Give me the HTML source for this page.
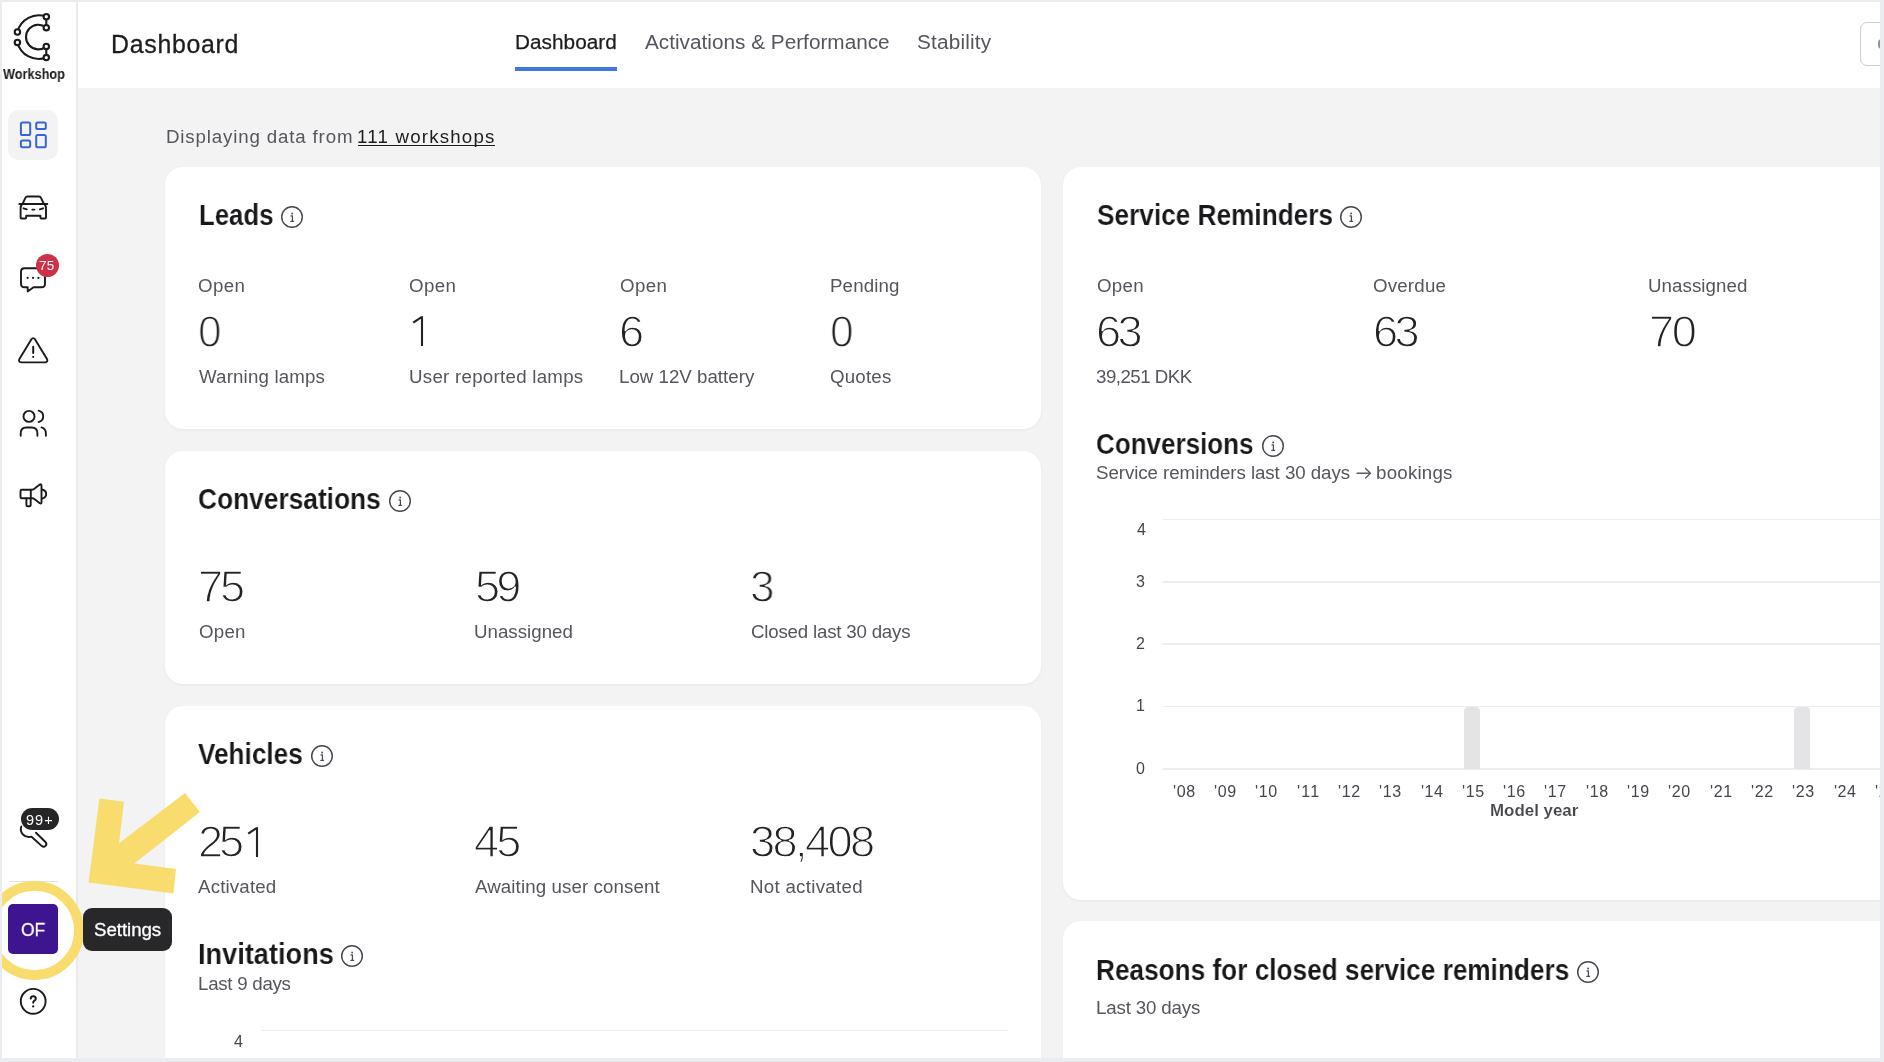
<!DOCTYPE html>
<html lang="en">
<head>
<meta charset="utf-8">
<title>Dashboard</title>
<style>
*{box-sizing:border-box;margin:0;padding:0}
html,body{width:1884px;height:1062px;overflow:hidden;background:#f3f3f3;font-family:"Liberation Sans",sans-serif;}
#root{position:absolute;left:0;top:0;width:1884px;height:1062px;overflow:hidden;background:#f3f3f3}
.a{position:absolute}
.t{position:absolute;white-space:nowrap;line-height:1;transform-origin:0 50%;will-change:transform;}
.card{position:absolute;background:#fff;border-radius:18px;box-shadow:0 1px 3px rgba(0,0,0,.05);}
.num{-webkit-text-stroke:1.35px #fff;}
.sb{-webkit-text-stroke:0.12px #fff;}
.gl{position:absolute;height:2px;background:#ededef}
#sidebar{left:2px;top:2px;width:76px;height:1056px;background:#fff;border-right:2px solid #eaeaed}
#header{left:78px;top:2px;width:1802px;height:86px;background:#fff}
.fr{position:absolute;background:#ebecf0;z-index:50}
</style>
</head>
<body>
<div id="root">
<div class="a" id="header"></div>
<div class="a" id="sidebar"></div>
<div class="card" style="left:165px;top:166.6px;width:876.3px;height:262px"></div>
<div class="card" style="left:165px;top:450.6px;width:876.3px;height:233px"></div>
<div class="card" style="left:165px;top:705.8px;width:876.3px;height:400px"></div>
<div class="card" style="left:1063px;top:166.6px;width:900px;height:733px"></div>
<div class="card" style="left:1063px;top:920.8px;width:900px;height:300px"></div>
<span class="t" style="left:110.66px;top:31.65px;font-size:24.9px;color:#1d1d20;letter-spacing:0.704px;-webkit-text-stroke:0.3px #1d1d20;">Dashboard</span>
<span class="t" style="left:515.10px;top:32.23px;font-size:20.75px;color:#1d1d20;letter-spacing:0.041px;-webkit-text-stroke:0.25px #1d1d20;">Dashboard</span>
<span class="t" style="left:645.46px;top:32.23px;font-size:20.75px;color:#55555e;letter-spacing:0.007px;">Activations &amp; Performance</span>
<span class="t" style="left:917.26px;top:32.23px;font-size:20.75px;color:#55555e;letter-spacing:0.178px;">Stability</span>
<div class="a" style="left:515px;top:67px;width:102px;height:4px;background:#4178dc"></div>
<div class="a" style="left:1860px;top:21.5px;width:40px;height:44px;border:1.5px solid #cdcdd2;border-radius:7px;background:#fff"></div>
<div class="a" style="left:1877.8px;top:39px;width:8px;height:9.5px;border-radius:5px;background:#909096"></div>
<span class="t" style="left:165.57px;top:127.75px;font-size:18.7px;color:#55555e;letter-spacing:0.848px;">Displaying data from</span>
<span class="t" style="left:357.18px;top:128.05px;font-size:18.7px;color:#1d1d20;letter-spacing:1.208px;">111 workshops</span>
<div class="a" style="left:357.5px;top:145px;width:137px;height:1.4px;background:#1d1d20"></div>
<span class="t sb" style="left:198.78px;top:200.50px;font-size:29px;color:#18181b;font-weight:700;transform:scaleX(0.8886);">Leads</span>
<svg class="a" style="left:279.70px;top:204.75px" width="24" height="24" viewBox="0 0 24 24"><circle cx="12" cy="12" r="10.3" fill="none" stroke="#484852" stroke-width="1.45"/><path d="M11 10.9h1.4v5.200M10.800 16.300h2.800" fill="none" stroke="#484852" stroke-width="1.200" stroke-linecap="round" stroke-linejoin="round"/><circle cx="12.1" cy="8.500" r="0.900" fill="#484852"/></svg>
<span class="t" style="left:198.11px;top:276.65px;font-size:18.7px;color:#55555e;letter-spacing:0.418px;">Open</span>
<span class="t" style="left:408.71px;top:276.65px;font-size:18.7px;color:#55555e;letter-spacing:0.418px;">Open</span>
<span class="t" style="left:619.71px;top:276.65px;font-size:18.7px;color:#55555e;letter-spacing:0.385px;">Open</span>
<span class="t" style="left:830.17px;top:276.65px;font-size:18.7px;color:#55555e;letter-spacing:0.152px;">Pending</span>
<span class="t num" style="left:198.45px;top:308.60px;font-size:45.2px;color:#232326;transform:scaleX(0.9349);">0</span>
<svg class="a" style="left:410.00px;top:313.90px" width="16" height="34" viewBox="-12 -32 16 34"><path d="M-1.05 -29.7H1.05V0H-1.05V-27.2L-8.1 -22.4L-9.4 -24.2Z" fill="#232326"/></svg>
<span class="t num" style="left:618.91px;top:308.60px;font-size:45.2px;color:#232326;transform:scaleX(0.9973);">6</span>
<span class="t num" style="left:830.44px;top:308.60px;font-size:45.2px;color:#232326;transform:scaleX(0.9395);">0</span>
<span class="t" style="left:198.92px;top:368.45px;font-size:18.7px;color:#55555e;letter-spacing:0.162px;">Warning lamps</span>
<span class="t" style="left:408.56px;top:368.45px;font-size:18.7px;color:#55555e;letter-spacing:0.273px;">User reported lamps</span>
<span class="t" style="left:619.47px;top:368.45px;font-size:18.7px;color:#55555e;letter-spacing:0.017px;">Low 12V battery</span>
<span class="t" style="left:830.31px;top:368.45px;font-size:18.7px;color:#55555e;letter-spacing:0.214px;">Quotes</span>
<span class="t sb" style="left:198.42px;top:484.70px;font-size:29px;color:#18181b;font-weight:700;transform:scaleX(0.9072);">Conversations</span>
<svg class="a" style="left:388.00px;top:488.90px" width="24" height="24" viewBox="0 0 24 24"><circle cx="12" cy="12" r="10.3" fill="none" stroke="#484852" stroke-width="1.45"/><path d="M11 10.9h1.4v5.200M10.800 16.300h2.800" fill="none" stroke="#484852" stroke-width="1.200" stroke-linecap="round" stroke-linejoin="round"/><circle cx="12.1" cy="8.500" r="0.900" fill="#484852"/></svg>
<span class="t num" style="left:197.68px;top:564.00px;font-size:45.2px;color:#232326;letter-spacing:-3.161px;">75</span>
<span class="t num" style="left:475.09px;top:564.00px;font-size:45.2px;color:#232326;letter-spacing:-3.926px;">59</span>
<span class="t num" style="left:750.21px;top:564.00px;font-size:45.2px;color:#232326;transform:scaleX(0.9799);">3</span>
<span class="t" style="left:198.61px;top:622.55px;font-size:18.7px;color:#55555e;letter-spacing:0.251px;">Open</span>
<span class="t" style="left:474.46px;top:622.55px;font-size:18.7px;color:#55555e;letter-spacing:0.021px;">Unassigned</span>
<span class="t" style="left:750.95px;top:622.55px;font-size:18.7px;color:#55555e;letter-spacing:-0.198px;">Closed last 30 days</span>
<span class="t sb" style="left:198.32px;top:740.10px;font-size:29px;color:#18181b;font-weight:700;transform:scaleX(0.9024);">Vehicles</span>
<svg class="a" style="left:309.60px;top:744.40px" width="24" height="24" viewBox="0 0 24 24"><circle cx="12" cy="12" r="10.3" fill="none" stroke="#484852" stroke-width="1.45"/><path d="M11 10.9h1.4v5.200M10.800 16.300h2.800" fill="none" stroke="#484852" stroke-width="1.200" stroke-linecap="round" stroke-linejoin="round"/><circle cx="12.1" cy="8.500" r="0.900" fill="#484852"/></svg>
<span class="t num" style="left:198.13px;top:818.90px;font-size:45.2px;color:#232326;letter-spacing:-4.205px;">25</span>
<svg class="a" style="left:245.40px;top:824.50px" width="16" height="34" viewBox="-12 -32 16 34"><path d="M-1.05 -29.7H1.05V0H-1.05V-27.2L-8.1 -22.4L-9.4 -24.2Z" fill="#232326"/></svg>
<span class="t num" style="left:473.86px;top:818.90px;font-size:45.2px;color:#232326;letter-spacing:-2.841px;">45</span>
<span class="t num" style="left:750.18px;top:818.90px;font-size:45.2px;color:#232326;letter-spacing:-2.593px;">38,408</span>
<span class="t" style="left:198.26px;top:878.35px;font-size:18.7px;color:#55555e;letter-spacing:0.165px;">Activated</span>
<span class="t" style="left:474.76px;top:878.35px;font-size:18.7px;color:#55555e;letter-spacing:0.113px;">Awaiting user consent</span>
<span class="t" style="left:750.37px;top:878.35px;font-size:18.7px;color:#55555e;letter-spacing:0.291px;">Not activated</span>
<span class="t sb" style="left:197.98px;top:939.90px;font-size:29px;color:#18181b;font-weight:700;transform:scaleX(0.9360);">Invitations</span>
<svg class="a" style="left:340.10px;top:943.80px" width="24" height="24" viewBox="0 0 24 24"><circle cx="12" cy="12" r="10.3" fill="none" stroke="#484852" stroke-width="1.45"/><path d="M11 10.9h1.4v5.200M10.800 16.300h2.800" fill="none" stroke="#484852" stroke-width="1.200" stroke-linecap="round" stroke-linejoin="round"/><circle cx="12.1" cy="8.500" r="0.900" fill="#484852"/></svg>
<span class="t" style="left:198.27px;top:974.65px;font-size:18.7px;color:#55555e;letter-spacing:-0.263px;">Last 9 days</span>
<div class="gl" style="left:261px;top:1029.5px;width:746.5px;height:1.2px"></div>
<span class="t" style="left:234.13px;top:1033.50px;font-size:16px;color:#45454c;">4</span>
<span class="t sb" style="left:1096.64px;top:200.50px;font-size:29px;color:#18181b;font-weight:700;transform:scaleX(0.9038);">Service Reminders</span>
<svg class="a" style="left:1338.90px;top:204.75px" width="24" height="24" viewBox="0 0 24 24"><circle cx="12" cy="12" r="10.3" fill="none" stroke="#484852" stroke-width="1.45"/><path d="M11 10.9h1.4v5.200M10.800 16.300h2.800" fill="none" stroke="#484852" stroke-width="1.200" stroke-linecap="round" stroke-linejoin="round"/><circle cx="12.1" cy="8.500" r="0.900" fill="#484852"/></svg>
<span class="t" style="left:1096.51px;top:276.65px;font-size:18.7px;color:#55555e;letter-spacing:0.318px;">Open</span>
<span class="t" style="left:1373.11px;top:276.65px;font-size:18.7px;color:#55555e;letter-spacing:0.199px;">Overdue</span>
<span class="t" style="left:1648.46px;top:276.65px;font-size:18.7px;color:#55555e;letter-spacing:0.076px;">Unassigned</span>
<span class="t num" style="left:1096.40px;top:308.60px;font-size:45.2px;color:#232326;letter-spacing:-3.595px;">63</span>
<span class="t num" style="left:1372.80px;top:308.60px;font-size:45.2px;color:#232326;letter-spacing:-3.695px;">63</span>
<span class="t num" style="left:1648.78px;top:308.60px;font-size:45.2px;color:#232326;letter-spacing:-2.393px;">70</span>
<span class="t" style="left:1096.49px;top:368.25px;font-size:18.7px;color:#55555e;letter-spacing:-0.513px;">39,251 DKK</span>
<span class="t sb" style="left:1096.33px;top:429.60px;font-size:29px;color:#18181b;font-weight:700;transform:scaleX(0.8968);">Conversions</span>
<svg class="a" style="left:1260.80px;top:433.60px" width="24" height="24" viewBox="0 0 24 24"><circle cx="12" cy="12" r="10.3" fill="none" stroke="#484852" stroke-width="1.45"/><path d="M11 10.9h1.4v5.200M10.800 16.300h2.800" fill="none" stroke="#484852" stroke-width="1.200" stroke-linecap="round" stroke-linejoin="round"/><circle cx="12.1" cy="8.500" r="0.900" fill="#484852"/></svg>
<span class="t" style="left:1096.45px;top:464.35px;font-size:18.7px;color:#55555e;letter-spacing:-0.050px;">Service reminders last 30 days</span>
<svg class="a" style="left:1355px;top:466px" width="18" height="14" viewBox="0 0 18 14"><path d="M2 7.2h13.400M10.600 2.400l4.900 4.800-4.900 4.800" fill="none" stroke="#5a5a63" stroke-width="1.350" stroke-linecap="round" stroke-linejoin="round"/></svg>
<span class="t" style="left:1376.19px;top:464.35px;font-size:18.7px;color:#55555e;letter-spacing:0.232px;">bookings</span>
<div class="gl" style="left:1163px;top:518.9px;width:760px;height:1.6px"></div>
<div class="gl" style="left:1163px;top:581.0px;width:760px;height:1.6px"></div>
<div class="gl" style="left:1163px;top:643.4px;width:760px;height:1.6px"></div>
<div class="gl" style="left:1163px;top:705.8px;width:760px;height:1.6px"></div>
<div class="gl" style="left:1163px;top:768.2px;width:760px;height:1.6px"></div>
<span class="t" style="left:1136.53px;top:522.30px;font-size:16px;color:#45454c;">4</span>
<span class="t" style="left:1136.29px;top:573.80px;font-size:16px;color:#45454c;">3</span>
<span class="t" style="left:1136.10px;top:635.80px;font-size:16px;color:#45454c;">2</span>
<span class="t" style="left:1136.28px;top:698.30px;font-size:16px;color:#45454c;">1</span>
<span class="t" style="left:1136.28px;top:760.80px;font-size:16px;color:#45454c;">0</span>
<div class="a" style="left:1463.5px;top:706.6px;width:16.5px;height:62.4px;background:#e4e4e6;border-radius:4px 4px 0 0"></div>
<div class="a" style="left:1793.5px;top:706.6px;width:16.5px;height:62.4px;background:#e4e4e6;border-radius:4px 4px 0 0"></div>
<span class="t" style="left:1172.79px;top:784.30px;font-size:16px;color:#45454c;letter-spacing:0.628px;">'08</span>
<span class="t" style="left:1214.09px;top:784.30px;font-size:16px;color:#45454c;letter-spacing:0.659px;">'09</span>
<span class="t" style="left:1255.39px;top:784.30px;font-size:16px;color:#45454c;letter-spacing:0.593px;">'10</span>
<span class="t" style="left:1296.69px;top:784.30px;font-size:16px;color:#45454c;letter-spacing:1.265px;">'11</span>
<span class="t" style="left:1337.99px;top:784.30px;font-size:16px;color:#45454c;letter-spacing:0.683px;">'12</span>
<span class="t" style="left:1379.29px;top:784.30px;font-size:16px;color:#45454c;letter-spacing:0.632px;">'13</span>
<span class="t" style="left:1420.59px;top:784.30px;font-size:16px;color:#45454c;letter-spacing:0.515px;">'14</span>
<span class="t" style="left:1461.89px;top:784.30px;font-size:16px;color:#45454c;letter-spacing:0.616px;">'15</span>
<span class="t" style="left:1503.19px;top:784.30px;font-size:16px;color:#45454c;letter-spacing:0.632px;">'16</span>
<span class="t" style="left:1544.49px;top:784.30px;font-size:16px;color:#45454c;letter-spacing:0.683px;">'17</span>
<span class="t" style="left:1585.79px;top:784.30px;font-size:16px;color:#45454c;letter-spacing:0.628px;">'18</span>
<span class="t" style="left:1627.09px;top:784.30px;font-size:16px;color:#45454c;letter-spacing:0.659px;">'19</span>
<span class="t" style="left:1668.39px;top:784.30px;font-size:16px;color:#45454c;letter-spacing:0.593px;">'20</span>
<span class="t" style="left:1709.69px;top:784.30px;font-size:16px;color:#45454c;letter-spacing:0.671px;">'21</span>
<span class="t" style="left:1750.99px;top:784.30px;font-size:16px;color:#45454c;letter-spacing:0.683px;">'22</span>
<span class="t" style="left:1792.29px;top:784.30px;font-size:16px;color:#45454c;letter-spacing:0.632px;">'23</span>
<span class="t" style="left:1833.59px;top:784.30px;font-size:16px;color:#45454c;letter-spacing:0.515px;">'24</span>
<span class="t" style="left:1874.89px;top:784.30px;font-size:16px;color:#45454c;letter-spacing:0.616px;">'25</span>
<span class="t sb" style="left:1490.07px;top:803.20px;font-size:16.6px;color:#46464c;font-weight:700;transform:scaleX(1.0192);">Model year</span>
<span class="t sb" style="left:1095.65px;top:955.90px;font-size:29px;color:#18181b;font-weight:700;transform:scaleX(0.9034);">Reasons for closed service reminders</span>
<svg class="a" style="left:1575.50px;top:960.00px" width="24" height="24" viewBox="0 0 24 24"><circle cx="12" cy="12" r="10.3" fill="none" stroke="#484852" stroke-width="1.45"/><path d="M11 10.9h1.4v5.200M10.800 16.300h2.800" fill="none" stroke="#484852" stroke-width="1.200" stroke-linecap="round" stroke-linejoin="round"/><circle cx="12.1" cy="8.500" r="0.900" fill="#484852"/></svg>
<span class="t" style="left:1095.87px;top:998.75px;font-size:18.7px;color:#55555e;letter-spacing:-0.157px;">Last 30 days</span>
<svg class="a" style="left:10px;top:8px" width="48" height="58" viewBox="10 8 48 58" fill="none" stroke="#1b1b1d" stroke-width="2.1" stroke-linecap="round">
<path d="M17.4 32A22 22 0 0 1 46.3 16.7"/>
<path d="M17.4 42.4A22 22 0 0 0 46.3 57.6"/>
<path d="M46.3 27.7A12.300 12.300 0 1 0 46.300 46.400"/>
<path d="M46.3 19.600v5.200M46.300 49v5.400"/>
<circle cx="46.300" cy="16.700" r="2.700" fill="#fff"/><circle cx="46.300" cy="27.700" r="2.700" fill="#fff"/>
<circle cx="46.300" cy="46.400" r="2.700" fill="#fff"/><circle cx="46.300" cy="57.600" r="2.700" fill="#fff"/>
<circle cx="17.400" cy="32" r="2.700" fill="#fff"/><circle cx="17.400" cy="42.400" r="2.700" fill="#fff"/>
</svg>
<span class="t" style="left:2.59px;top:68.40px;font-size:13.8px;color:#1b1b1d;font-weight:700;transform:scaleX(0.9214);">Workshop</span>
<div class="a" style="left:8.2px;top:110px;width:50px;height:50px;border-radius:11px;background:#f3f3f4"></div>
<svg class="a" style="left:18px;top:120px" width="30" height="30" viewBox="18 120 30 30" fill="none" stroke="#3567d6" stroke-width="2" stroke-linejoin="round">
<rect x="20.9" y="122.5" width="9.3" height="12.6" rx="1.6"/>
<rect x="36.2" y="122.5" width="9.6" height="6.6" rx="1.6"/>
<rect x="20.9" y="140.6" width="9.3" height="6.6" rx="1.6"/>
<rect x="36.2" y="134.9" width="9.6" height="12.4" rx="1.6"/>
</svg>
<svg class="a" style="left:17px;top:193px" width="34" height="30" viewBox="17 193 34 30" fill="none" stroke="#1b1b1d" stroke-width="1.9" stroke-linecap="round" stroke-linejoin="round">
<path d="M19.3 204h28"/>
<path d="M22.5 204l3-6.3q.6-1.2 2-1.2h11.400q1.400 0 2 1.200l3 6.300"/>
<path d="M22.200 204.200q-1.600 1.500-1.600 4v9.300q0 1 1 1h3.600q1 0 1-1v-1.800h14.200v1.800q0 1 1 1h3.600q1 0 1-1v-9.300q0-2.500-1.600-4"/>
<path d="M23.500 208.300l3.300 1M43.100 208.300l-3.300 1M32.300 209.600h2"/>
</svg>
<svg class="a" style="left:17px;top:264px" width="34" height="32" viewBox="17 264 34 32" fill="none" stroke="#1b1b1d" stroke-width="1.9" stroke-linecap="round" stroke-linejoin="round">
<path d="M24.500 268.200h17q3.500 0 3.500 3.500v12q0 3.500-3.500 3.500h-8l-5.800 4.300v-4.300h-3.200q-3.500 0-3.500-3.500v-12q0-3.500 3.500-3.500z"/>
<path d="M27.600 277.800h.1M33 277.800h.1M38.400 277.800h.1" stroke-width="2.200"/>
</svg>
<div class="a" style="left:35.500px;top:253.500px;width:23px;height:23px;border-radius:50%;background:#cf2f47"></div>
<span class="t" style="left:39.11px;top:259.35px;font-size:13.5px;color:#fff;letter-spacing:0.243px;">75</span>
<svg class="a" style="left:16px;top:334px" width="36" height="32" viewBox="16 334 36 32" fill="none" stroke="#1b1b1d" stroke-width="1.9" stroke-linecap="round" stroke-linejoin="round">
<path d="M31.300 339.400q1.900-2.600 3.800 0l11.900 19.600q1.300 3-1.900 3.400h-23.800q-3.200-.4-1.900-3.400z"/>
<path d="M33.200 346.800v6.300M33.200 356.800v.1" stroke-width="2"/>
</svg>
<svg class="a" style="left:17px;top:406px" width="34" height="34" viewBox="17 406 34 34" fill="none" stroke="#1b1b1d" stroke-width="1.9" stroke-linecap="round" stroke-linejoin="round">
<circle cx="29" cy="416.400" r="5.500"/>
<path d="M20.700 435.700v-2.500q0-5.700 5.700-5.700h5.300q5.700 0 5.700 5.700v2.500"/>
<path d="M38.600 410.600q4.600 1.100 4.600 5.700t-4.600 5.800"/>
<path d="M41.500 427.400q4.400 1.200 4.400 6v2.300"/>
</svg>
<svg class="a" style="left:17px;top:480px" width="34" height="30" viewBox="17 480 34 30" fill="none" stroke="#1b1b1d" stroke-width="1.900" stroke-linecap="round" stroke-linejoin="round">
<path d="M21.800 489.700h9v8.500h-9q-1.300 0-1.300-1.300v-5.900q0-1.300 1.300-1.300z"/>
<path d="M30.800 489.700h1.400q1 0 1.800-.6l5.800-4.500q1.500-.9 1.700.9v16.900q-.2 1.800-1.700.9l-5.800-4.500q-.8-.6-1.800-.6h-1.400"/>
<path d="M42 489.500q4.200 1 4.200 4.600t-4.200 4.600"/>
<path d="M26.400 498.400v6.500q0 1.300 1.300 1.300h1.700q1.300 0 1.300-1.300v-6.500"/>
</svg>
<svg class="a" style="left:17px;top:820px" width="34" height="30" viewBox="17 820 34 30" fill="none" stroke="#1b1b1d" stroke-width="1.900" stroke-linecap="round" stroke-linejoin="round">
<path d="M21.300 826.500q-1.600 4.500 1.700 8t8.500 2.200l10.400 9.400q1.900 1.500 3.600-.2t.2-3.600l-9.700-9.600"/>
</svg>
<div class="a" style="left:21px;top:808px;width:37.500px;height:22px;border-radius:11px;background:#262628"></div>
<span class="t" style="left:25.92px;top:812.85px;font-size:14.5px;color:#fff;letter-spacing:0.999px;">99+</span>
<div class="a" style="left:8.500px;top:880.500px;width:49.500px;height:1.500px;background:#e4e4e8"></div>
<div class="a" style="left:8.200px;top:904px;width:49.800px;height:50px;border-radius:5px;background:#3e1491"></div>
<span class="t" style="left:20.97px;top:921.00px;font-size:18.8px;color:#fff;transform:scaleX(0.9320);-webkit-text-stroke:0.3px #fff;">OF</span>
<svg class="a" style="left:18px;top:986px" width="30" height="30" viewBox="18 986 30 30" fill="none" stroke="#1b1b1d" stroke-width="1.900" stroke-linecap="round" stroke-linejoin="round">
<circle cx="33.200" cy="1001.300" r="12.400"/>
<path d="M30.700 998.600q.3-2.300 2.600-2.300t2.500 2.100q0 1.500-1.300 2.300t-1.300 2" stroke-width="2"/>
<path d="M33.200 1006.300v.1" stroke-width="2.300"/>
</svg>
<div class="a" style="left:83.2px;top:907.500px;width:88.8px;height:43.5px;border-radius:9px;background:#28282a;z-index:41"></div>
<span class="t" style="left:93.95px;top:920.65px;font-size:18.7px;color:#fff;letter-spacing:-0.049px;-webkit-text-stroke:0.3px #fff;z-index:42;">Settings</span>
<svg class="a" style="left:0;top:780px;z-index:40" width="240" height="220" viewBox="0 780 240 220"><circle cx="34.4" cy="930.500" r="44.600" fill="none" stroke="#f9dc6e" stroke-width="9.800"/><polygon points="185,793 200,812 134.300,863.600 176,869 173.400,893.500 88.600,882.600 99.400,798.600 124,801.700 119,843.300" fill="#f9dc6e"/></svg>
<div class="fr" style="left:0;top:0;width:1884px;height:2px"></div>
<div class="fr" style="left:0;top:0;width:2px;height:1062px"></div>
<div class="fr" style="left:1880px;top:0;width:4px;height:1062px"></div>
<div class="fr" style="left:0;top:1058px;width:1884px;height:4px"></div>
</div>
</body>
</html>
